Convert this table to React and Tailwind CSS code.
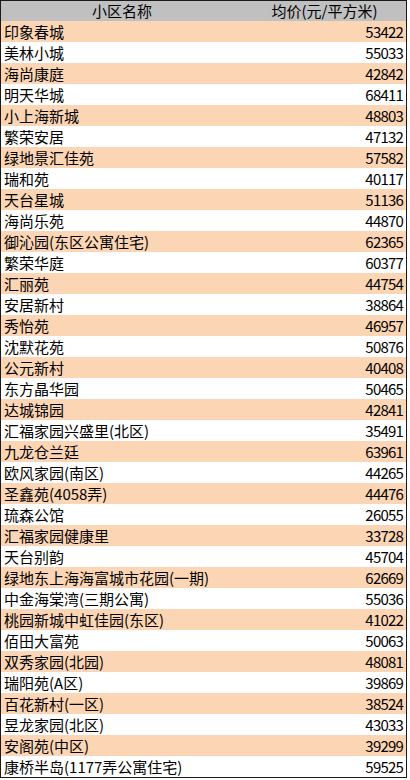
import React from "react";

const ROWS = [
  ["印象春城", 53422],
  ["美林小城", 55033],
  ["海尚康庭", 42842],
  ["明天华城", 68411],
  ["小上海新城", 48803],
  ["繁荣安居", 47132],
  ["绿地景汇佳苑", 57582],
  ["瑞和苑", 40117],
  ["天台星城", 51136],
  ["海尚乐苑", 44870],
  ["御沁园(东区公寓住宅)", 62365],
  ["繁荣华庭", 60377],
  ["汇丽苑", 44754],
  ["安居新村", 38864],
  ["秀怡苑", 46957],
  ["沈默花苑", 50876],
  ["公元新村", 40408],
  ["东方晶华园", 50465],
  ["达城锦园", 42841],
  ["汇福家园兴盛里(北区)", 35491],
  ["九龙仓兰廷", 63961],
  ["欧风家园(南区)", 44265],
  ["圣鑫苑(4058弄)", 44476],
  ["琉森公馆", 26055],
  ["汇福家园健康里", 33728],
  ["天台别韵", 45704],
  ["绿地东上海海富城市花园(一期)", 62669],
  ["中金海棠湾(三期公寓)", 55036],
  ["桃园新城中虹佳园(东区)", 41022],
  ["佰田大富苑", 50063],
  ["双秀家园(北园)", 48081],
  ["瑞阳苑(A区)", 39869],
  ["百花新村(一区)", 38524],
  ["昱龙家园(北区)", 43033],
  ["安阁苑(中区)", 39299],
  ["康桥半岛(1177弄公寓住宅)", 59525],
];

const font = "font-['Noto_Sans_CJK_SC','Noto_Sans',sans-serif]";

export default function App() {
  return (
    <div className="min-h-screen bg-white">
      <div className={`w-[407px] border border-[#1a1a1a] text-[15px] text-black ${font}`}>
        <div className="grid h-[20px] grid-cols-[242px_1fr] items-center bg-[#c0c0c0] leading-[20px]">
          <div className="text-center">小区名称</div>
          <div className="text-center">均价(元/平方米)</div>
        </div>
        {ROWS.map(([name, price], i) => (
          <div
            key={name}
            className={[
              "grid h-[21px] grid-cols-[242px_1fr] items-center leading-[21px]",
              i % 2 === 0 ? "bg-[#fcd5b4]" : "bg-white",
            ].join(" ")}
          >
            <div className="whitespace-nowrap pl-[3px]">{name}</div>
            <div className="pr-[3px] text-right tracking-[-0.8px]">{price}</div>
          </div>
        ))}
      </div>
    </div>
  );
}
